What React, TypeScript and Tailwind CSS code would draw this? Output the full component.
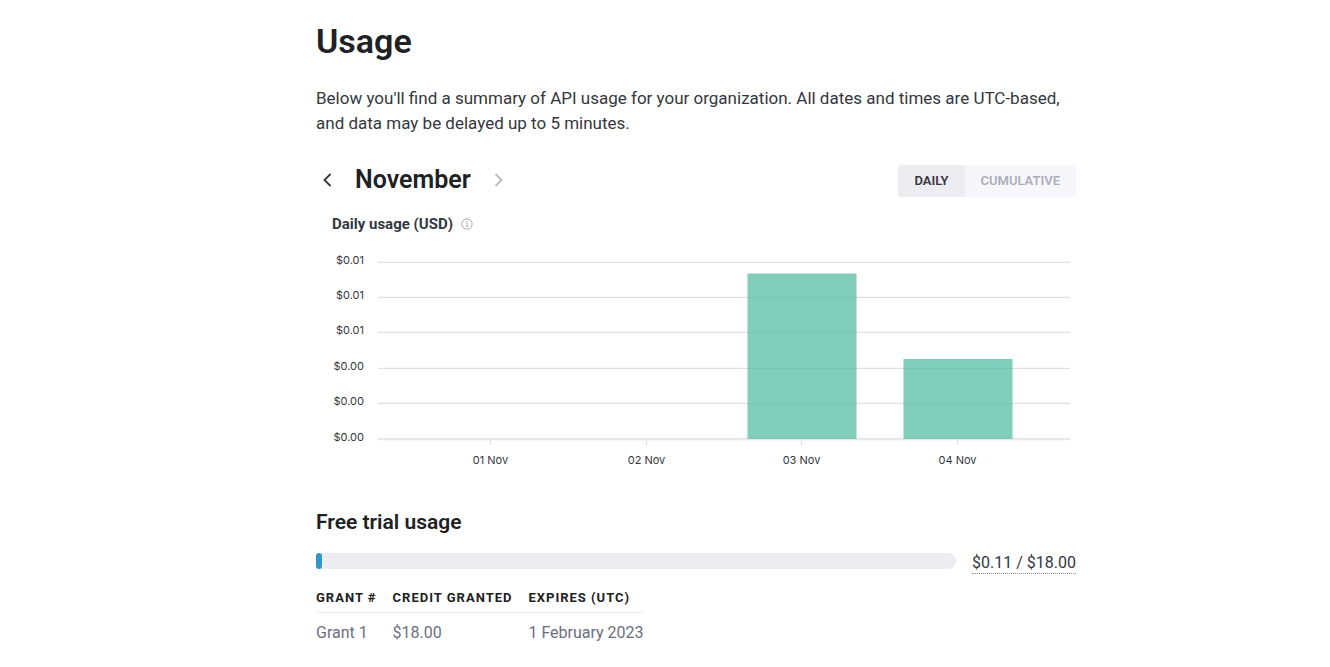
import React, { useState } from "react";

const GRID = [
  { y: 22, label: "$0.01" },
  { y: 57, label: "$0.01" },
  { y: 92, label: "$0.01" },
  { y: 128, label: "$0.00" },
  { y: 163, label: "$0.00" },
];

const DAYS = [
  { x: 174, label: "01 Nov", height: 0 },
  { x: 330, label: "02 Nov", height: 0 },
  { x: 485, label: "03 Nov", height: 165.5 },
  { x: 641, label: "04 Nov", height: 80 },
];

const GRANTS = [{ name: "Grant 1", credit: "$18.00", expires: "1 February 2023" }];

function UsageChart() {
  return (
    <svg
      viewBox="0 0 760 240"
      className="block w-full font-['Inter',sans-serif] text-[11px]"
      role="img"
      aria-label="Daily usage (USD)"
    >
      {GRID.map((line) => (
        <g key={line.y}>
          <rect x="62" y={line.y - 0.2} width="692" height="1.2" fill="#e0e0e0" />
          <text x="48" y={line.y + 2} textAnchor="end" fill="#353740">
            {line.label}
          </text>
        </g>
      ))}
      <rect x="62" y="198" width="692" height="2.3" fill="#e8e8e8" />
      <text x="48" y="201" textAnchor="end" fill="#353740">
        $0.00
      </text>
      {DAYS.map((day) => (
        <g key={day.label}>
          <rect x={day.x} y="200" width="1" height="5" fill="#dcdcdc" />
          {day.height > 0 && (
            <rect
              x={day.x - 53.5}
              y={199 - day.height}
              width="109"
              height={day.height}
              fill="#5abea5"
              fillOpacity="0.77"
            />
          )}
          <text x={day.x + 0.5} y="224" textAnchor="middle" fill="#353740">
            {day.label}
          </text>
        </g>
      ))}
    </svg>
  );
}

export default function App() {
  const [mode, setMode] = useState<"daily" | "cumulative">("daily");
  const active = "bg-[#ececf1] text-[#353740]";
  const idle = "bg-[#f7f7fb] text-[#acacbe]";

  return (
    <main className="min-h-screen bg-white pl-[62px] font-['Roboto',sans-serif] text-[#353740]">
      <div className="mx-auto max-w-[760px] pt-5">
        <h1 className="text-[34px] leading-[42px] font-semibold text-[#202123]">Usage</h1>
        <p className="mt-6 text-[17px] leading-[25px]">
          Below you'll find a summary of API usage for your organization. All dates and times are UTC-based, and data
          may be delayed up to 5 minutes.
        </p>

        <div className="mt-7 flex items-end justify-between">
          <div className="flex items-center pb-px">
            <button type="button" aria-label="Previous month" className="flex size-6 items-center justify-center">
              <svg width="16" height="16" viewBox="0 0 16 16" fill="none" stroke="#353740" strokeWidth="1.8">
                <path d="M10.5 2 4.5 8l6 6" />
              </svg>
            </button>
            <h2 className="px-[15px] text-[25px] leading-8 font-semibold text-[#202123]">November</h2>
            <button type="button" aria-label="Next month" disabled className="flex size-6 items-center justify-center">
              <svg width="16" height="16" viewBox="0 0 16 16" fill="none" stroke="#b8b8bc" strokeWidth="1.8">
                <path d="m5.5 2 6 6-6 6" />
              </svg>
            </button>
          </div>
          <div className="flex overflow-hidden rounded-[3px] text-[13px] leading-8 font-semibold">
            <button
              type="button"
              aria-pressed={mode === "daily"}
              onClick={() => setMode("daily")}
              className={`px-4 ${mode === "daily" ? active : idle}`}
            >
              DAILY
            </button>
            <button
              type="button"
              aria-pressed={mode === "cumulative"}
              onClick={() => setMode("cumulative")}
              className={`px-4 ${mode === "cumulative" ? active : idle}`}
            >
              CUMULATIVE
            </button>
          </div>
        </div>

        <div className="mt-[15px] flex items-center gap-2 pl-4">
          <h3 className="text-[15px] leading-6 font-bold">Daily usage (USD)</h3>
          <svg width="12" height="12" viewBox="0 0 12 12" fill="none" stroke="#a0a0a8">
            <circle cx="6" cy="6" r="5.2" strokeWidth="0.9" />
            <path d="M5 5.3h1.1v3M4.8 8.4h2.5" strokeWidth="0.8" />
            <circle cx="6" cy="3.4" r="0.6" fill="#a0a0a8" stroke="none" />
          </svg>
        </div>
        <div className="mt-1">
          <UsageChart />
        </div>

        <h2 className="mt-7 text-[21px] leading-7 font-semibold text-[#202123]">Free trial usage</h2>
        <div className="mt-3 flex items-start gap-4">
          <div className="mt-[5px] h-4 flex-1 rounded-l-[3px] rounded-r-lg bg-[#ececf1]">
            <div className="h-4 w-[6px] rounded-[3px] bg-[#3096cc]" />
          </div>
          <span className="border-b border-dotted border-[#8e8ea0] pt-1 text-base leading-[21px]">
            $0.11 / $18.00
          </span>
        </div>

        <table className="mt-3 text-left">
          <thead>
            <tr className="border-b border-[#ececf1] text-[13px] leading-4 tracking-[1px] text-[#202123]">
              <th className="pt-1 pr-4 pb-[6px] font-bold">GRANT #</th>
              <th className="pt-1 pr-4 pb-[6px] font-bold">CREDIT GRANTED</th>
              <th className="pt-1 pb-[6px] font-bold">EXPIRES (UTC)</th>
            </tr>
          </thead>
          <tbody>
            {GRANTS.map((grant) => (
              <tr key={grant.name} className="text-base leading-6 text-[#6e6e80]">
                <td className="py-2 pr-4">{grant.name}</td>
                <td className="py-2 pr-4">{grant.credit}</td>
                <td className="py-2">{grant.expires}</td>
              </tr>
            ))}
          </tbody>
        </table>
      </div>
    </main>
  );
}
